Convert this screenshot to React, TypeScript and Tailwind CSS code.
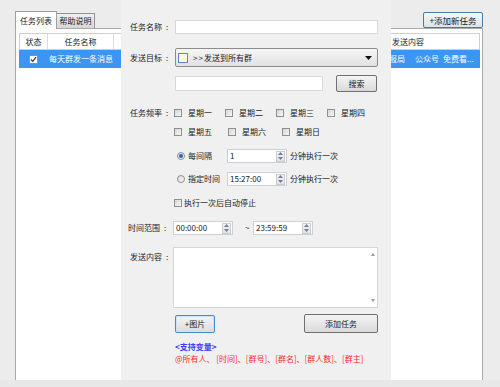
import React from 'react'

function Box({ checked }: { checked?: boolean }) {
    return (
        <span className='w-[8px] h-[8px] shrink-0 border border-[#8e8f8f] bg-linear-to-br from-[#d6d6d6] to-[#f7f7f7] flex items-center justify-center'>
            {checked && (
                <svg width='7' height='7' viewBox='0 0 7 7'>
                    <path d='M1 3.5 L2.8 5.3 L6 1.2' stroke='#1f2f4f' strokeWidth='1.2' fill='none' />
                </svg>
            )}
        </span>
    )
}

function Radio({ on }: { on?: boolean }) {
    return (
        <span className='w-[8px] h-[8px] shrink-0 rounded-full border border-[#8e8f8f] bg-linear-to-br from-[#dadada] to-[#f7f7f7] flex items-center justify-center'>
            {on && <span className='w-[4px] h-[4px] rounded-full bg-[#2b64c4]' />}
        </span>
    )
}

function Spin({ value }: { value: string }) {
    return (
        <div className='w-[60px] h-full shrink-0 bg-white border border-[#cdd0d6] flex items-center pl-[2px]'>
            <span>{value}</span>
            <span className='ml-auto mr-[1px] w-[9px] h-[11px] flex flex-col items-center justify-around border border-[#c8ccd2] bg-linear-to-b from-[#f4f4f4] to-[#e2e2e2]'>
                <svg width='5' height='3' viewBox='0 0 5 3'><path d='M0 3 L2.5 0 L5 3 Z' fill='#6d7f99' /></svg>
                <svg width='5' height='3' viewBox='0 0 5 3'><path d='M0 0 L2.5 3 L5 0 Z' fill='#6d7f99' /></svg>
            </span>
        </div>
    )
}

function Day({ label }: { label: string }) {
    return (
        <div className='w-[54px] flex items-center gap-[6px]'>
            <Box />
            <span>{label}</span>
        </div>
    )
}

// label with the loose colon the original form uses
function Label({ text, w }: { text: string; w: string }) {
    return (
        <span className={`${w} shrink-0 flex`}>
            <span>{text}</span>
            <span className='ml-[4px]'>:</span>
        </span>
    )
}

export default function App() {
    return (
        <div className="w-[500px] h-[387px] bg-[#ececec] flex flex-col overflow-hidden text-[8px] leading-none text-[#1a1a1a] font-['Noto_Sans_CJK_SC','Noto_Sans',sans-serif]">
            <div className='relative h-[380px] shrink-0'>
                {/* main window */}
                <div className='pl-[15px] pt-[10px] w-[483px] h-full flex flex-col'>
                    <div className='flex items-end h-[18px]'>
                        <div className='w-[42px] h-[18px] bg-white border-t border-l border-r border-[#a0a0a0] -mb-px relative z-10 flex items-center justify-center'>任务列表</div>
                        <div className='w-[38px] h-[15px] bg-linear-to-b from-[#f0f0f0] to-[#d6d6d6] border-t border-r border-[#929292] flex items-center justify-center'>帮助说明</div>
                        <button className='ml-auto w-[60px] h-[16px] rounded-[2px] border border-[#3c7fb1] bg-linear-to-b from-[#f5f8fa] to-[#dde3e8] flex items-center justify-center text-[8.5px]'>+添加新任务</button>
                    </div>
                    <div className='flex-1 bg-white border-t border-l border-r border-[#a9a9a9] pt-[4px] pl-[3px] pr-[2px]'>
                        <div className='flex h-[17px] border border-[#cfcfcf] bg-white'>
                            <div className='w-[28px] border-r border-[#dcdcdc] flex items-center justify-center'>状态</div>
                            <div className='w-[66px] border-r border-[#dcdcdc] flex items-center justify-center'>任务名称</div>
                            <div className='w-[268px]' />
                            <div className='flex-1 flex items-center pl-[10px]'>发送内容</div>
                        </div>
                        <div className='flex h-[18px] bg-[#3d95f3] text-white items-center'>
                            <div className='w-[28px] flex items-center justify-center'>
                                <span className='w-[9px] h-[9px] border border-[#8e8f8f] bg-white flex items-center justify-center'>
                                    <svg width='7' height='7' viewBox='0 0 7 7'>
                                        <path d='M1 3.5 L2.8 5.3 L6 1.2' stroke='#1f2f4f' strokeWidth='1.2' fill='none' />
                                    </svg>
                                </span>
                            </div>
                            <div className='w-[66px] pl-[2px] whitespace-nowrap'>每天群发一条消息</div>
                            <div className='w-[268px]' />
                            <div className='flex-1 flex items-center whitespace-nowrap'>
                                <span>播报局</span>
                                <span className='ml-[10px]'>公众号</span>
                                <span className='ml-[4px]'>免费看...</span>
                            </div>
                        </div>
                    </div>
                </div>

                {/* add task dialog */}
                <div className='absolute left-[121px] top-0 w-[270px] h-[380px] bg-[#f0f0f0] pl-[9px] pr-[13px] flex flex-col'>
                    <div className='mt-[20px] h-[14px] flex items-center'>
                        <Label text='任务名称' w='w-[45px]' />
                        <div className='w-[204px] h-full bg-white border border-[#d9d9d9]' />
                    </div>
                    <div className='mt-[14px] h-[19px] flex items-center'>
                        <Label text='发送目标' w='w-[45px]' />
                        <div className='w-[203px] h-full rounded-[2px] border border-[#8c8c8c] bg-linear-to-b from-[#f6f6f6] to-[#e1e1e1] flex items-center pl-[2px]'>
                            <span className='w-[10px] h-[10px] border border-[#5b87c6] bg-[#fdf7e4]' />
                            <span className='ml-[5px] tracking-[1px]'>&gt;&gt;</span>
                            <span>发送到所有群</span>
                            <svg className='ml-auto mr-[5px]' width='7' height='4' viewBox='0 0 7 4'><path d='M0 0 L7 0 L3.5 4 Z' fill='#111' /></svg>
                        </div>
                    </div>
                    <div className='mt-[8px] h-[17px] flex items-center pl-[45px]'>
                        <div className='w-[148px] h-[15px] bg-white border border-[#d9d9d9]' />
                        <button className='ml-[13px] w-[41px] h-[17px] rounded-[2px] border border-[#707070] bg-linear-to-b from-[#f4f4f4] to-[#dadada] flex items-center justify-center'>搜索</button>
                    </div>
                    <div className='mt-[16px] h-[10px] flex items-center'>
                        <Label text='任务频率' w='w-[44px]' />
                        <Day label='星期一' />
                        <Day label='星期二' />
                        <Day label='星期三' />
                        <Day label='星期四' />
                    </div>
                    <div className='mt-[9px] h-[10px] flex items-center pl-[44px]'>
                        <Day label='星期五' />
                        <Day label='星期六' />
                        <Day label='星期日' />
                    </div>
                    <div className='mt-[12px] h-[14px] flex items-center pl-[44px]'>
                        <div className='w-[53px] flex items-center gap-[3px] pl-[3px]'>
                            <Radio on />
                            <span>每间隔</span>
                        </div>
                        <Spin value='1' />
                        <span className='ml-[3px]'>分钟执行一次</span>
                    </div>
                    <div className='mt-[9px] h-[14px] flex items-center pl-[44px]'>
                        <div className='w-[53px] flex items-center gap-[3px] pl-[3px]'>
                            <Radio />
                            <span>指定时间</span>
                        </div>
                        <Spin value='15:27:00' />
                        <span className='ml-[3px]'>分钟执行一次</span>
                    </div>
                    <div className='mt-[12px] h-[10px] flex items-center gap-[2px] pl-[44px]'>
                        <Box />
                        <span>执行一次后自动停止</span>
                    </div>
                    <div className='mt-[13px] h-[14px] flex items-center -ml-[2px]'>
                        <Label text='时间范围' w='w-[45px]' />
                        <Spin value='00:00:00' />
                        <span className='w-[20px] pl-[12px]'>~</span>
                        <Spin value='23:59:59' />
                    </div>
                    <div className='mt-[12px] h-[61px] flex items-start'>
                        <span className='w-[43px] shrink-0 pt-[6px] flex'>
                            <span>发送内容</span>
                            <span className='ml-[4px]'>:</span>
                        </span>
                        <div className='w-[205px] h-full bg-white border border-[#d5d5d5] flex justify-end'>
                            <div className='w-[9px] h-full flex flex-col items-center justify-between py-[5px]'>
                                <svg width='4' height='3' viewBox='0 0 4 3'><path d='M0 3 L2 0 L4 3 Z' fill='#9a9a9a' /></svg>
                                <svg width='4' height='3' viewBox='0 0 4 3'><path d='M0 0 L2 3 L4 0 Z' fill='#9a9a9a' /></svg>
                            </div>
                        </div>
                    </div>
                    <div className='mt-[6px] h-[19px] flex items-center pl-[45px]'>
                        <button className='w-[40px] h-[18px] rounded-[2px] border border-[#3c8fd6] bg-linear-to-b from-[#f5f5f5] to-[#dcdcdc] shadow-[inset_0_0_0_1px_#c6e4fb] flex items-center justify-center'>+图片</button>
                        <button className='ml-auto w-[74px] h-[19px] rounded-[2px] border border-[#707070] bg-linear-to-b from-[#f4f4f4] to-[#dadada] flex items-center justify-center'>添加任务</button>
                    </div>
                    <div className='mt-[9px] h-[10px] flex items-center pl-[45px] text-[#3b3bff] font-bold'>&lt;支持变量&gt;</div>
                    <div className='mt-[2px] h-[10px] flex items-center pl-[45px] text-[#ff2a2a] whitespace-nowrap'>@所有人、 [时间]、[群号]、[群名]、[群人数]、[群主]</div>
                </div>
            </div>
            <div className='flex-1 bg-[#e8e8e8]' />
        </div>
    )
}
